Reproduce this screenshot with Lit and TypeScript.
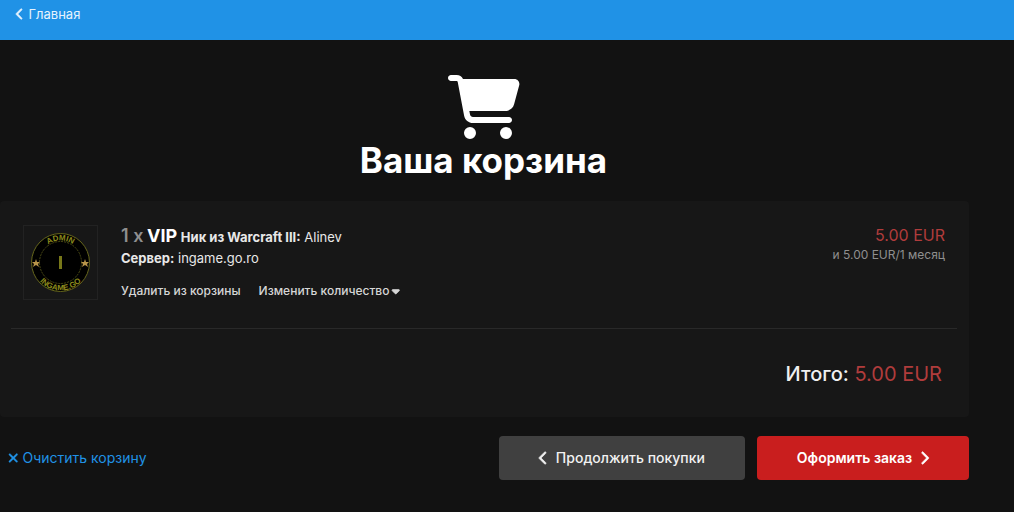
import { LitElement, html, css, svg } from "lit";
import { customElement } from "lit/decorators.js";

const chevronLeft = "M9.4 233.4c-12.5 12.5-12.5 32.8 0 45.3l192 192c12.5 12.5 32.8 12.5 45.3 0s12.5-32.8 0-45.3L77.3 256 246.6 86.6c12.5-12.5 12.5-32.8 0-45.3s-32.8-12.5-45.3 0l-192 192z";
const chevronRight = "M310.6 233.4c12.5 12.5 12.5 32.8 0 45.3l-192 192c-12.5 12.5-32.8 12.5-45.3 0s-12.5-32.8 0-45.3L242.7 256 73.4 86.6c-12.5-12.5-12.5-32.8 0-45.3s32.8-12.5 45.3 0l192 192z";
const xmark = "M342.6 150.6c12.5-12.5 12.5-32.8 0-45.3s-32.8-12.5-45.3 0L192 210.7 86.6 105.4c-12.5-12.5-32.8-12.5-45.3 0s-12.5 32.8 0 45.3L146.7 256 41.4 361.4c-12.5 12.5-12.5 32.8 0 45.3s32.8 12.5 45.3 0L192 301.3 297.4 406.6c12.5 12.5 32.8 12.5 45.3 0s12.5-32.8 0-45.3L237.3 256 342.6 150.6z";
const caretDown = "M137.4 374.6c12.5 12.5 32.8 12.5 45.3 0l128-128c9.2-9.2 11.9-22.9 6.9-34.9s-16.6-19.8-29.6-19.8L32 192c-12.9 0-24.6 7.8-29.6 19.8s-2.2 25.7 6.9 34.9l128 128z";
const cart = "M0 24C0 10.7 10.7 0 24 0H69.5c22 0 41.5 12.8 50.6 32h411c26.3 0 45.5 25 38.6 50.4l-41 152.3c-8.5 31.4-37 53.3-69.5 53.3H170.7l5.4 28.5c2.2 11.3 12.1 19.5 23.6 19.5H488c13.3 0 24 10.7 24 24s-10.7 24-24 24H199.7c-34.6 0-64.3-24.6-70.7-58.5L77.4 54.5c-.7-3.8-4-6.5-7.9-6.5H24C10.7 48 0 37.3 0 24zM128 464a48 48 0 1 1 96 0 48 48 0 1 1 -96 0zm336-48a48 48 0 1 1 0 96 48 48 0 1 1 0-96z";

const icon = (path: string, width = 320) =>
  html`<svg class="icon" viewBox="0 0 ${width} 512" aria-hidden="true"><path d=${path}></path></svg>`;

const star = (x: number) =>
  svg`<path transform="translate(${x} 37)" fill="#b8954a" d="M0-4 1-1 4-1 2 1 3 4 0 2-3 4-2 1-4-1-1-1z"></path>`;

@customElement("app-root")
export class AppRoot extends LitElement {
  static styles = css`
    :host {
      display: block;
      min-height: 100vh;
      background: #121212;
      color: #e8e8e8;
      font-family: Inter, "Liberation Sans", sans-serif;
      font-size: 13px;
      line-height: 20px;
    }
    * { box-sizing: border-box; }
    a { color: inherit; text-decoration: none; }
    .icon {
      height: 1em;
      fill: currentColor;
      stroke: currentColor;
      stroke-width: 28;
      overflow: visible;
      flex: none;
    }
    .bar {
      height: 40px;
      padding: 4px 16px;
      background: #2092e6;
    }
    .home { display: inline-flex; align-items: center; gap: 5px; color: #e6f3fd; }
    .home .icon { height: 12px; }
    .page { padding: 35px 45px 32px 0; }
    .head {
      display: flex;
      flex-direction: column;
      align-items: center;
      padding-right: 2px;
      color: #fff;
      margin-bottom: 20px;
    }
    .cart { height: 64px; fill: currentColor; }
    h1 {
      margin: 0;
      font-size: 35px;
      line-height: 42px;
      font-weight: 700;
    }
    .card {
      background: #171717;
      border-radius: 4px;
      padding: 24px 12px 29px 11px;
    }
    .item { display: flex; gap: 23px; padding: 0 12px 27px; }
    .thumb { width: 75px; height: 75px; border: 1px solid #222; flex: none; }
    .thumb svg { display: block; width: 73px; height: 73px; }
    .seal { font: 700 8px "Liberation Sans", sans-serif; fill: #8c8a1c; text-anchor: middle; }
    .info { flex: 1; }
    .line { line-height: 22px; }
    .server { line-height: 20px; }
    .qty { font-size: 18px; font-weight: 600; color: #8f8f8f; }
    .name { font-size: 18px; font-weight: 700; color: #fff; }
    b { font-weight: 700; }
    .actions { display: flex; gap: 18px; margin-top: 13px; font-size: 12px; font-weight: 500; color: #d6d6d6; }
    button { border: 0; padding: 0; background: none; font: inherit; color: inherit; display: inline-flex; align-items: center; gap: 3px; }
    .price { text-align: right; font-size: 12px; color: #8f8f8f; }
    .sum { font-size: 16px; color: #b03c3c; }
    .total {
      border-top: 1px solid #292929;
      padding: 31px 15px 0;
      text-align: right;
      font-size: 20px;
      line-height: 28px;
    }
    .total strong { font-weight: 500; color: #f0f0f0; }
    .total span { color: #b03c3c; }
    .foot { display: flex; align-items: center; gap: 12px; margin-top: 19px; font-size: 14px; }
    .clear { display: inline-flex; align-items: center; gap: 4px; color: #2092e6; margin: 0 auto 0 8px; }
    .clear .icon { stroke-width: 12; }
    .btn {
      display: flex;
      align-items: center;
      gap: 8px;
      height: 44px;
      padding: 0 40px;
      border-radius: 4px;
      font-weight: 500;
      color: #f2f2f2;
      background: #404040;
    }
    .order { background: #c91e1e; color: #fff; font-weight: 600; }
  `;

  render() {
    return html`
      <nav class="bar"><a class="home" href="#">${icon(chevronLeft)}Главная</a></nav>
      <main class="page">
        <header class="head">
          <svg class="cart" viewBox="0 0 576 512" aria-hidden="true"><path d=${cart}></path></svg>
          <h1>Ваша корзина</h1>
        </header>
        <section class="card">
          <div class="item">
            <div class="thumb">
              <svg viewBox="0 0 73 73" role="img" aria-label="VIP">
                <circle cx="36.5" cy="36.5" r="29" fill="#000" stroke="#65651c"></circle>
                <circle cx="36.5" cy="36.5" r="21" fill="none" stroke="#4c4c16" stroke-dasharray="2 1"></circle>
                <path id="top" fill="none" d="M14.5 36.5a22 22 0 0 1 44 0"></path>
                <path id="bottom" fill="none" d="M8.5 36.5a28 28 0 0 0 56 0"></path>
                <text class="seal"><textPath href="#top" startOffset="50%">ADMIN</textPath></text>
                <text class="seal"><textPath href="#bottom" startOffset="50%">INGAME.GO</textPath></text>
                <rect x="35" y="30" width="3" height="13" fill="#777719"></rect>
                ${star(12)}${star(61)}
              </svg>
            </div>
            <div class="info">
              <div class="line"><span class="qty">1 x</span> <span class="name">VIP</span> <b>Ник из Warcraft III:</b> Alinev</div>
              <div class="server"><b>Сервер:</b> ingame.go.ro</div>
              <div class="actions">
                <a href="#">Удалить из корзины</a>
                <button type="button">Изменить количество${icon(caretDown)}</button>
              </div>
            </div>
            <div class="price"><div class="sum">5.00 EUR</div>и 5.00 EUR/1 месяц</div>
          </div>
          <div class="total"><strong>Итого:</strong> <span>5.00 EUR</span></div>
        </section>
        <footer class="foot">
          <a class="clear" href="#">${icon(xmark, 384)}Очистить корзину</a>
          <button class="btn" type="button">${icon(chevronLeft)}Продолжить покупки</button>
          <button class="btn order" type="button">Оформить заказ${icon(chevronRight)}</button>
        </footer>
      </main>
    `;
  }
}
